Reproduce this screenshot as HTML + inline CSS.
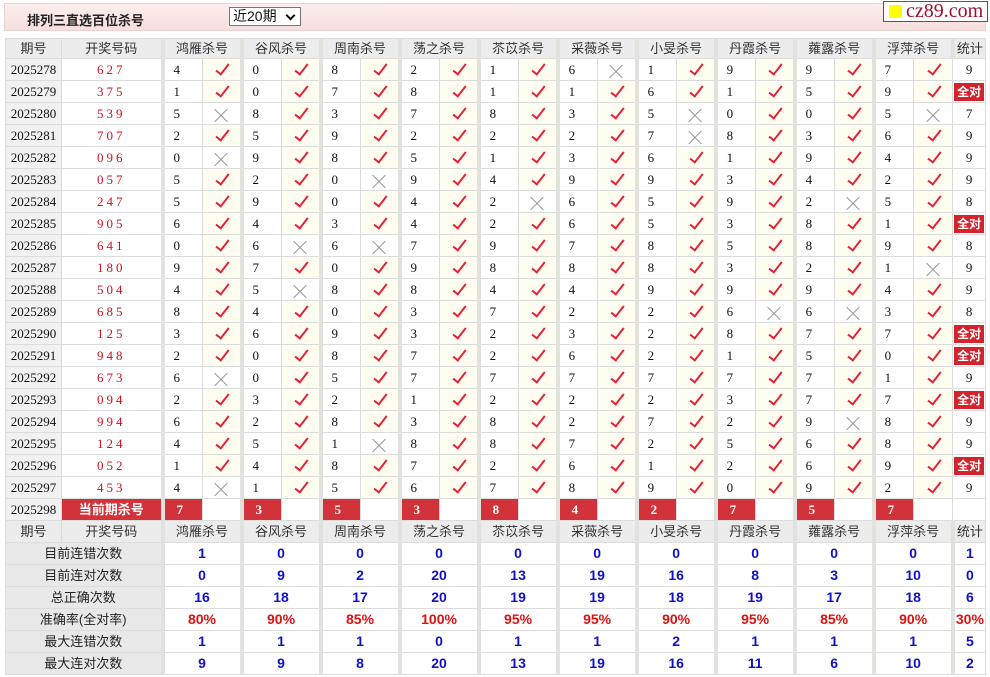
<!DOCTYPE html>
<html><head><meta charset="utf-8"><style>
*{margin:0;padding:0;box-sizing:border-box}
body{width:990px;height:677px;background:#fff;font-family:"Liberation Serif","Noto Serif CJK SC",serif;position:relative;overflow:hidden}
.top{position:absolute;left:4px;top:3px;width:982px;height:28px;background:linear-gradient(#fdeeee,#f7dede);border:1px solid #ead2d2}
.title{position:absolute;left:22px;top:6px;font:bold 13px "Liberation Sans","Noto Sans CJK SC",sans-serif;color:#222}
.sel{position:absolute;left:224px;top:3px;width:72px;height:19px;border:1px solid #777;background:#fff;font:14px "Liberation Sans","Noto Sans CJK SC",sans-serif;padding-left:3px;line-height:17px;color:#111}
.sel:after{content:"";position:absolute;right:6px;top:4px;width:5px;height:5px;border-right:2px solid #111;border-bottom:2px solid #111;transform:rotate(45deg)}
.logo{position:absolute;left:883px;top:1px;width:105px;height:21px;background:#fff;border:1px solid #a83040;font:20px "Liberation Serif",serif;color:#a01030;line-height:18px;padding-left:22px}
.logo:before{content:"";position:absolute;left:5px;top:3px;width:13px;height:13px;background:#ffff00}
table{position:absolute;left:5px;top:38px;border-collapse:collapse;table-layout:fixed;width:980px}
tr{height:22px}
tr.h1{height:20px}
td{border:1px solid #dcdcdc;text-align:center;font-size:13px;color:#111;padding:0;line-height:19px;white-space:nowrap;overflow:hidden}
.h td{background:#ececec;font-family:"Liberation Sans","Noto Sans CJK SC",sans-serif;color:#333;line-height:18px}
td.p{background:#f1f1f1}
td.k{color:#d01020;letter-spacing:3px}
td.g{border-left:4px solid #e2e2dc;text-align:left;padding-left:9px}
td.c{background:#fffdf0}
td.w{background:#fff}
i.o{display:inline-block;width:7px;height:14px;border-right:2px solid #e3223a;border-bottom:2px solid #e3223a;transform:rotate(38deg);margin-top:1px;margin-left:2px}
i.x{display:inline-block;width:14px;height:14px;position:relative;vertical-align:middle}
i.x:before,i.x:after{content:"";position:absolute;left:-2px;top:7px;width:18px;height:1px;background:#999;transform:rotate(45deg)}
i.x:after{transform:rotate(-45deg)}
td.s b{display:block;margin:1px;background:#d3242e;color:#fff;font:bold 12px "Liberation Sans","Noto Sans CJK SC",sans-serif;line-height:18px}
td.rn{background:#d2333a;color:#fff;font-weight:bold;text-align:left;padding-left:12px}
td.kk{background:#d2333a;color:#fff;font-weight:bold;font-family:"Liberation Sans","Noto Sans CJK SC",sans-serif}
.st td{font-weight:bold;font-size:14px;font-family:"Liberation Sans",sans-serif;color:#1010c8;line-height:19px}
.st td.l{background:#e8e8e8;font-weight:normal;font-size:13px;font-family:"Liberation Sans","Noto Sans CJK SC",sans-serif;color:#222}
.st td.g{text-align:center;padding-left:0}
.st .rd td{color:#e01010}
.st .rd td.l{color:#222}
</style></head><body>
<div class="top"><div class="title">排列三直选百位杀号</div><div class="sel">近20期</div></div>
<div class="logo">cz89.com</div>
<table>
<colgroup><col style="width:56px"><col style="width:101px"><col style="width:40px"><col style="width:39px"><col style="width:40px"><col style="width:39px"><col style="width:40px"><col style="width:39px"><col style="width:40px"><col style="width:39px"><col style="width:40px"><col style="width:39px"><col style="width:40px"><col style="width:39px"><col style="width:40px"><col style="width:39px"><col style="width:40px"><col style="width:39px"><col style="width:40px"><col style="width:39px"><col style="width:40px"><col style="width:39px"><col style="width:33px"></colgroup>
<tr class="h h1"><td>期号</td><td>开奖号码</td><td class="g" colspan="2" style="text-align:center;padding:0">鸿雁杀号</td><td class="g" colspan="2" style="text-align:center;padding:0">谷风杀号</td><td class="g" colspan="2" style="text-align:center;padding:0">周南杀号</td><td class="g" colspan="2" style="text-align:center;padding:0">荡之杀号</td><td class="g" colspan="2" style="text-align:center;padding:0">苶苡杀号</td><td class="g" colspan="2" style="text-align:center;padding:0">采薇杀号</td><td class="g" colspan="2" style="text-align:center;padding:0">小旻杀号</td><td class="g" colspan="2" style="text-align:center;padding:0">丹霞杀号</td><td class="g" colspan="2" style="text-align:center;padding:0">蕹露杀号</td><td class="g" colspan="2" style="text-align:center;padding:0">浮萍杀号</td><td class="g" style="text-align:center;padding:0">统计</td></tr>
<tr><td class="p">2025278</td><td class="k">627</td><td class="g">4</td><td class="c"><i class="o"></i></td><td class="g">0</td><td class="c"><i class="o"></i></td><td class="g">8</td><td class="c"><i class="o"></i></td><td class="g">2</td><td class="c"><i class="o"></i></td><td class="g">1</td><td class="c"><i class="o"></i></td><td class="g">6</td><td class="w"><i class="x"></i></td><td class="g">1</td><td class="c"><i class="o"></i></td><td class="g">9</td><td class="c"><i class="o"></i></td><td class="g">9</td><td class="c"><i class="o"></i></td><td class="g">7</td><td class="c"><i class="o"></i></td><td class="s">9</td></tr>
<tr><td class="p">2025279</td><td class="k">375</td><td class="g">1</td><td class="c"><i class="o"></i></td><td class="g">0</td><td class="c"><i class="o"></i></td><td class="g">7</td><td class="c"><i class="o"></i></td><td class="g">8</td><td class="c"><i class="o"></i></td><td class="g">1</td><td class="c"><i class="o"></i></td><td class="g">1</td><td class="c"><i class="o"></i></td><td class="g">6</td><td class="c"><i class="o"></i></td><td class="g">1</td><td class="c"><i class="o"></i></td><td class="g">5</td><td class="c"><i class="o"></i></td><td class="g">9</td><td class="c"><i class="o"></i></td><td class="s"><b>全对</b></td></tr>
<tr><td class="p">2025280</td><td class="k">539</td><td class="g">5</td><td class="w"><i class="x"></i></td><td class="g">8</td><td class="c"><i class="o"></i></td><td class="g">3</td><td class="c"><i class="o"></i></td><td class="g">7</td><td class="c"><i class="o"></i></td><td class="g">8</td><td class="c"><i class="o"></i></td><td class="g">3</td><td class="c"><i class="o"></i></td><td class="g">5</td><td class="w"><i class="x"></i></td><td class="g">0</td><td class="c"><i class="o"></i></td><td class="g">0</td><td class="c"><i class="o"></i></td><td class="g">5</td><td class="w"><i class="x"></i></td><td class="s">7</td></tr>
<tr><td class="p">2025281</td><td class="k">707</td><td class="g">2</td><td class="c"><i class="o"></i></td><td class="g">5</td><td class="c"><i class="o"></i></td><td class="g">9</td><td class="c"><i class="o"></i></td><td class="g">2</td><td class="c"><i class="o"></i></td><td class="g">2</td><td class="c"><i class="o"></i></td><td class="g">2</td><td class="c"><i class="o"></i></td><td class="g">7</td><td class="w"><i class="x"></i></td><td class="g">8</td><td class="c"><i class="o"></i></td><td class="g">3</td><td class="c"><i class="o"></i></td><td class="g">6</td><td class="c"><i class="o"></i></td><td class="s">9</td></tr>
<tr><td class="p">2025282</td><td class="k">096</td><td class="g">0</td><td class="w"><i class="x"></i></td><td class="g">9</td><td class="c"><i class="o"></i></td><td class="g">8</td><td class="c"><i class="o"></i></td><td class="g">5</td><td class="c"><i class="o"></i></td><td class="g">1</td><td class="c"><i class="o"></i></td><td class="g">3</td><td class="c"><i class="o"></i></td><td class="g">6</td><td class="c"><i class="o"></i></td><td class="g">1</td><td class="c"><i class="o"></i></td><td class="g">9</td><td class="c"><i class="o"></i></td><td class="g">4</td><td class="c"><i class="o"></i></td><td class="s">9</td></tr>
<tr><td class="p">2025283</td><td class="k">057</td><td class="g">5</td><td class="c"><i class="o"></i></td><td class="g">2</td><td class="c"><i class="o"></i></td><td class="g">0</td><td class="w"><i class="x"></i></td><td class="g">9</td><td class="c"><i class="o"></i></td><td class="g">4</td><td class="c"><i class="o"></i></td><td class="g">9</td><td class="c"><i class="o"></i></td><td class="g">9</td><td class="c"><i class="o"></i></td><td class="g">3</td><td class="c"><i class="o"></i></td><td class="g">4</td><td class="c"><i class="o"></i></td><td class="g">2</td><td class="c"><i class="o"></i></td><td class="s">9</td></tr>
<tr><td class="p">2025284</td><td class="k">247</td><td class="g">5</td><td class="c"><i class="o"></i></td><td class="g">9</td><td class="c"><i class="o"></i></td><td class="g">0</td><td class="c"><i class="o"></i></td><td class="g">4</td><td class="c"><i class="o"></i></td><td class="g">2</td><td class="w"><i class="x"></i></td><td class="g">6</td><td class="c"><i class="o"></i></td><td class="g">5</td><td class="c"><i class="o"></i></td><td class="g">9</td><td class="c"><i class="o"></i></td><td class="g">2</td><td class="w"><i class="x"></i></td><td class="g">5</td><td class="c"><i class="o"></i></td><td class="s">8</td></tr>
<tr><td class="p">2025285</td><td class="k">905</td><td class="g">6</td><td class="c"><i class="o"></i></td><td class="g">4</td><td class="c"><i class="o"></i></td><td class="g">3</td><td class="c"><i class="o"></i></td><td class="g">4</td><td class="c"><i class="o"></i></td><td class="g">2</td><td class="c"><i class="o"></i></td><td class="g">6</td><td class="c"><i class="o"></i></td><td class="g">5</td><td class="c"><i class="o"></i></td><td class="g">3</td><td class="c"><i class="o"></i></td><td class="g">8</td><td class="c"><i class="o"></i></td><td class="g">1</td><td class="c"><i class="o"></i></td><td class="s"><b>全对</b></td></tr>
<tr><td class="p">2025286</td><td class="k">641</td><td class="g">0</td><td class="c"><i class="o"></i></td><td class="g">6</td><td class="w"><i class="x"></i></td><td class="g">6</td><td class="w"><i class="x"></i></td><td class="g">7</td><td class="c"><i class="o"></i></td><td class="g">9</td><td class="c"><i class="o"></i></td><td class="g">7</td><td class="c"><i class="o"></i></td><td class="g">8</td><td class="c"><i class="o"></i></td><td class="g">5</td><td class="c"><i class="o"></i></td><td class="g">8</td><td class="c"><i class="o"></i></td><td class="g">9</td><td class="c"><i class="o"></i></td><td class="s">8</td></tr>
<tr><td class="p">2025287</td><td class="k">180</td><td class="g">9</td><td class="c"><i class="o"></i></td><td class="g">7</td><td class="c"><i class="o"></i></td><td class="g">0</td><td class="c"><i class="o"></i></td><td class="g">9</td><td class="c"><i class="o"></i></td><td class="g">8</td><td class="c"><i class="o"></i></td><td class="g">8</td><td class="c"><i class="o"></i></td><td class="g">8</td><td class="c"><i class="o"></i></td><td class="g">3</td><td class="c"><i class="o"></i></td><td class="g">2</td><td class="c"><i class="o"></i></td><td class="g">1</td><td class="w"><i class="x"></i></td><td class="s">9</td></tr>
<tr><td class="p">2025288</td><td class="k">504</td><td class="g">4</td><td class="c"><i class="o"></i></td><td class="g">5</td><td class="w"><i class="x"></i></td><td class="g">8</td><td class="c"><i class="o"></i></td><td class="g">8</td><td class="c"><i class="o"></i></td><td class="g">4</td><td class="c"><i class="o"></i></td><td class="g">4</td><td class="c"><i class="o"></i></td><td class="g">9</td><td class="c"><i class="o"></i></td><td class="g">9</td><td class="c"><i class="o"></i></td><td class="g">9</td><td class="c"><i class="o"></i></td><td class="g">4</td><td class="c"><i class="o"></i></td><td class="s">9</td></tr>
<tr><td class="p">2025289</td><td class="k">685</td><td class="g">8</td><td class="c"><i class="o"></i></td><td class="g">4</td><td class="c"><i class="o"></i></td><td class="g">0</td><td class="c"><i class="o"></i></td><td class="g">3</td><td class="c"><i class="o"></i></td><td class="g">7</td><td class="c"><i class="o"></i></td><td class="g">2</td><td class="c"><i class="o"></i></td><td class="g">2</td><td class="c"><i class="o"></i></td><td class="g">6</td><td class="w"><i class="x"></i></td><td class="g">6</td><td class="w"><i class="x"></i></td><td class="g">3</td><td class="c"><i class="o"></i></td><td class="s">8</td></tr>
<tr><td class="p">2025290</td><td class="k">125</td><td class="g">3</td><td class="c"><i class="o"></i></td><td class="g">6</td><td class="c"><i class="o"></i></td><td class="g">9</td><td class="c"><i class="o"></i></td><td class="g">3</td><td class="c"><i class="o"></i></td><td class="g">2</td><td class="c"><i class="o"></i></td><td class="g">3</td><td class="c"><i class="o"></i></td><td class="g">2</td><td class="c"><i class="o"></i></td><td class="g">8</td><td class="c"><i class="o"></i></td><td class="g">7</td><td class="c"><i class="o"></i></td><td class="g">7</td><td class="c"><i class="o"></i></td><td class="s"><b>全对</b></td></tr>
<tr><td class="p">2025291</td><td class="k">948</td><td class="g">2</td><td class="c"><i class="o"></i></td><td class="g">0</td><td class="c"><i class="o"></i></td><td class="g">8</td><td class="c"><i class="o"></i></td><td class="g">7</td><td class="c"><i class="o"></i></td><td class="g">2</td><td class="c"><i class="o"></i></td><td class="g">6</td><td class="c"><i class="o"></i></td><td class="g">2</td><td class="c"><i class="o"></i></td><td class="g">1</td><td class="c"><i class="o"></i></td><td class="g">5</td><td class="c"><i class="o"></i></td><td class="g">0</td><td class="c"><i class="o"></i></td><td class="s"><b>全对</b></td></tr>
<tr><td class="p">2025292</td><td class="k">673</td><td class="g">6</td><td class="w"><i class="x"></i></td><td class="g">0</td><td class="c"><i class="o"></i></td><td class="g">5</td><td class="c"><i class="o"></i></td><td class="g">7</td><td class="c"><i class="o"></i></td><td class="g">7</td><td class="c"><i class="o"></i></td><td class="g">7</td><td class="c"><i class="o"></i></td><td class="g">7</td><td class="c"><i class="o"></i></td><td class="g">7</td><td class="c"><i class="o"></i></td><td class="g">7</td><td class="c"><i class="o"></i></td><td class="g">1</td><td class="c"><i class="o"></i></td><td class="s">9</td></tr>
<tr><td class="p">2025293</td><td class="k">094</td><td class="g">2</td><td class="c"><i class="o"></i></td><td class="g">3</td><td class="c"><i class="o"></i></td><td class="g">2</td><td class="c"><i class="o"></i></td><td class="g">1</td><td class="c"><i class="o"></i></td><td class="g">2</td><td class="c"><i class="o"></i></td><td class="g">2</td><td class="c"><i class="o"></i></td><td class="g">2</td><td class="c"><i class="o"></i></td><td class="g">3</td><td class="c"><i class="o"></i></td><td class="g">7</td><td class="c"><i class="o"></i></td><td class="g">7</td><td class="c"><i class="o"></i></td><td class="s"><b>全对</b></td></tr>
<tr><td class="p">2025294</td><td class="k">994</td><td class="g">6</td><td class="c"><i class="o"></i></td><td class="g">2</td><td class="c"><i class="o"></i></td><td class="g">8</td><td class="c"><i class="o"></i></td><td class="g">3</td><td class="c"><i class="o"></i></td><td class="g">8</td><td class="c"><i class="o"></i></td><td class="g">2</td><td class="c"><i class="o"></i></td><td class="g">7</td><td class="c"><i class="o"></i></td><td class="g">2</td><td class="c"><i class="o"></i></td><td class="g">9</td><td class="w"><i class="x"></i></td><td class="g">8</td><td class="c"><i class="o"></i></td><td class="s">9</td></tr>
<tr><td class="p">2025295</td><td class="k">124</td><td class="g">4</td><td class="c"><i class="o"></i></td><td class="g">5</td><td class="c"><i class="o"></i></td><td class="g">1</td><td class="w"><i class="x"></i></td><td class="g">8</td><td class="c"><i class="o"></i></td><td class="g">8</td><td class="c"><i class="o"></i></td><td class="g">7</td><td class="c"><i class="o"></i></td><td class="g">2</td><td class="c"><i class="o"></i></td><td class="g">5</td><td class="c"><i class="o"></i></td><td class="g">6</td><td class="c"><i class="o"></i></td><td class="g">8</td><td class="c"><i class="o"></i></td><td class="s">9</td></tr>
<tr><td class="p">2025296</td><td class="k">052</td><td class="g">1</td><td class="c"><i class="o"></i></td><td class="g">4</td><td class="c"><i class="o"></i></td><td class="g">8</td><td class="c"><i class="o"></i></td><td class="g">7</td><td class="c"><i class="o"></i></td><td class="g">2</td><td class="c"><i class="o"></i></td><td class="g">6</td><td class="c"><i class="o"></i></td><td class="g">1</td><td class="c"><i class="o"></i></td><td class="g">2</td><td class="c"><i class="o"></i></td><td class="g">6</td><td class="c"><i class="o"></i></td><td class="g">9</td><td class="c"><i class="o"></i></td><td class="s"><b>全对</b></td></tr>
<tr><td class="p">2025297</td><td class="k">453</td><td class="g">4</td><td class="w"><i class="x"></i></td><td class="g">1</td><td class="c"><i class="o"></i></td><td class="g">5</td><td class="c"><i class="o"></i></td><td class="g">6</td><td class="c"><i class="o"></i></td><td class="g">7</td><td class="c"><i class="o"></i></td><td class="g">8</td><td class="c"><i class="o"></i></td><td class="g">9</td><td class="c"><i class="o"></i></td><td class="g">0</td><td class="c"><i class="o"></i></td><td class="g">9</td><td class="c"><i class="o"></i></td><td class="g">2</td><td class="c"><i class="o"></i></td><td class="s">9</td></tr>
<tr><td class="p">2025298</td><td class="kk">当前期杀号</td><td class="g rn">7</td><td></td><td class="g rn">3</td><td></td><td class="g rn">5</td><td></td><td class="g rn">3</td><td></td><td class="g rn">8</td><td></td><td class="g rn">4</td><td></td><td class="g rn">2</td><td></td><td class="g rn">7</td><td></td><td class="g rn">5</td><td></td><td class="g rn">7</td><td></td><td></td></tr>
<tr class="h"><td>期号</td><td>开奖号码</td><td class="g" colspan="2" style="text-align:center;padding:0">鸿雁杀号</td><td class="g" colspan="2" style="text-align:center;padding:0">谷风杀号</td><td class="g" colspan="2" style="text-align:center;padding:0">周南杀号</td><td class="g" colspan="2" style="text-align:center;padding:0">荡之杀号</td><td class="g" colspan="2" style="text-align:center;padding:0">苶苡杀号</td><td class="g" colspan="2" style="text-align:center;padding:0">采薇杀号</td><td class="g" colspan="2" style="text-align:center;padding:0">小旻杀号</td><td class="g" colspan="2" style="text-align:center;padding:0">丹霞杀号</td><td class="g" colspan="2" style="text-align:center;padding:0">蕹露杀号</td><td class="g" colspan="2" style="text-align:center;padding:0">浮萍杀号</td><td class="g" style="text-align:center;padding:0">统计</td></tr>
<tbody class="st">
<tr><td class="l" colspan="2">目前连错次数</td><td class="g" colspan="2">1</td><td class="g" colspan="2">0</td><td class="g" colspan="2">0</td><td class="g" colspan="2">0</td><td class="g" colspan="2">0</td><td class="g" colspan="2">0</td><td class="g" colspan="2">0</td><td class="g" colspan="2">0</td><td class="g" colspan="2">0</td><td class="g" colspan="2">0</td><td class="g">1</td></tr>
<tr><td class="l" colspan="2">目前连对次数</td><td class="g" colspan="2">0</td><td class="g" colspan="2">9</td><td class="g" colspan="2">2</td><td class="g" colspan="2">20</td><td class="g" colspan="2">13</td><td class="g" colspan="2">19</td><td class="g" colspan="2">16</td><td class="g" colspan="2">8</td><td class="g" colspan="2">3</td><td class="g" colspan="2">10</td><td class="g">0</td></tr>
<tr><td class="l" colspan="2">总正确次数</td><td class="g" colspan="2">16</td><td class="g" colspan="2">18</td><td class="g" colspan="2">17</td><td class="g" colspan="2">20</td><td class="g" colspan="2">19</td><td class="g" colspan="2">19</td><td class="g" colspan="2">18</td><td class="g" colspan="2">19</td><td class="g" colspan="2">17</td><td class="g" colspan="2">18</td><td class="g">6</td></tr>
<tr class="rd"><td class="l" colspan="2">准确率(全对率)</td><td class="g" colspan="2">80%</td><td class="g" colspan="2">90%</td><td class="g" colspan="2">85%</td><td class="g" colspan="2">100%</td><td class="g" colspan="2">95%</td><td class="g" colspan="2">95%</td><td class="g" colspan="2">90%</td><td class="g" colspan="2">95%</td><td class="g" colspan="2">85%</td><td class="g" colspan="2">90%</td><td class="g">30%</td></tr>
<tr><td class="l" colspan="2">最大连错次数</td><td class="g" colspan="2">1</td><td class="g" colspan="2">1</td><td class="g" colspan="2">1</td><td class="g" colspan="2">0</td><td class="g" colspan="2">1</td><td class="g" colspan="2">1</td><td class="g" colspan="2">2</td><td class="g" colspan="2">1</td><td class="g" colspan="2">1</td><td class="g" colspan="2">1</td><td class="g">5</td></tr>
<tr><td class="l" colspan="2">最大连对次数</td><td class="g" colspan="2">9</td><td class="g" colspan="2">9</td><td class="g" colspan="2">8</td><td class="g" colspan="2">20</td><td class="g" colspan="2">13</td><td class="g" colspan="2">19</td><td class="g" colspan="2">16</td><td class="g" colspan="2">11</td><td class="g" colspan="2">6</td><td class="g" colspan="2">10</td><td class="g">2</td></tr>
</tbody>
</table>
</body></html>
